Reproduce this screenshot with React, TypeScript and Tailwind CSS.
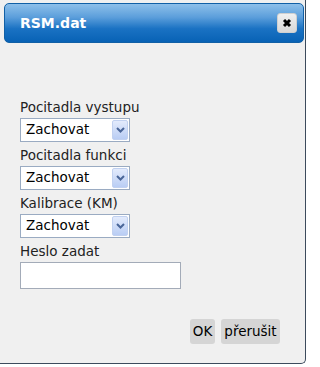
import React from 'react';

const fields = [
  { label: 'Pocitadla vystupu', value: 'Zachovat' },
  { label: 'Pocitadla funkci', value: 'Zachovat' },
  { label: 'Kalibrace (KM)', value: 'Zachovat' },
];

function Chevron() {
  return (
    <svg width="9" height="6" viewBox="0 0 9 6">
      <path d="M1 1 L4.5 4.5 L8 1" fill="none" stroke="#4a6699" strokeWidth="2" />
    </svg>
  );
}

function FakeSelect({ value }: { value: string }) {
  return (
    <div className="flex h-[24px] w-[110px] items-center border border-[#9aabc2] bg-white">
      <span className="flex-1 pl-[5px] text-[13.5px] leading-none text-black">{value}</span>
      <span className="mr-[1px] flex h-[20px] w-[16px] items-center justify-center rounded-[2px] border border-[#c1d1f0] bg-[linear-gradient(to_bottom,#e3ebfc,#b9cdf4)]">
        <Chevron />
      </span>
    </div>
  );
}

export default function App() {
  return (
    <div className="h-[367px] w-[309px] bg-white font-['DejaVu_Sans',sans-serif] text-[13.5px] text-[#222]">
      <div className="h-[364px] w-[306px] rounded-br-[5px] border-b border-r border-[#3c4b5c] bg-[#f0f0f0] pl-[4px] pt-[3px]">
        <div className="flex h-[40px] w-[300px] items-center justify-between rounded-[5px] border border-[#1160a6] bg-[linear-gradient(to_bottom,#8ec0ea_0%,#5b9edb_35%,#1a72c3_65%,#0862b5_100%)] pl-[15px] pr-[6px]">
          <span className="text-[14px] font-bold text-white">RSM.dat</span>
          <button className="flex h-[20px] w-[20px] items-center justify-center rounded-[3px] border border-[#d0d0d0] bg-[linear-gradient(to_bottom,#f0f0f0,#d8d8d8)]">
            <svg width="10" height="10" viewBox="0 0 10 10">
              <path d="M2 2 L8 8 M8 2 L2 8" stroke="#000" strokeWidth="3" />
            </svg>
          </button>
        </div>

        <div className="mt-[53px] pl-[16px]">
          {fields.map((f, i) => (
            <div key={i} className="mb-[2px]">
              <div className="h-[22px] leading-[22px]">{f.label}</div>
              <FakeSelect value={f.value} />
            </div>
          ))}
          <div>
            <div className="h-[22px] leading-[22px]">Heslo zadat</div>
            <input
              type="text"
              className="h-[27px] w-[161px] border border-[#a3abb8] bg-white outline-none"
            />
          </div>
        </div>

        <div className="mt-[30px] flex justify-end gap-[6px] pr-[25px]">
          <button className="flex h-[25px] w-[25px] items-center justify-center rounded-[3px] bg-[#d5d5d5] text-black">OK</button>
          <button className="flex h-[25px] w-[59px] items-center justify-center rounded-[3px] bg-[#d5d5d5] text-black">přerušit</button>
        </div>
      </div>
    </div>
  );
}
